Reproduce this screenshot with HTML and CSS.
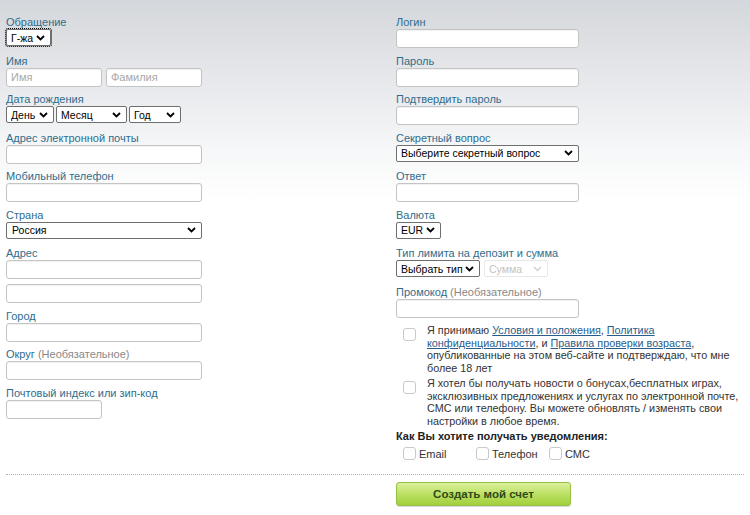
FILE: index.html
```html
<!DOCTYPE html>
<html lang="ru">
<head>
    <meta charset="UTF-8">
    <meta name="viewport" content="width=device-width, initial-scale=1.0">
    <title>Регистрация</title>
    <link rel="stylesheet" href="styles.css">
</head>
<body>
    <form class="signup">
        <div class="col">
            <div class="field">
                <label>Обращение</label>
                <select class="sel focused"><option>Г-жа</option></select>
            </div>
            <div class="field">
                <label>Имя</label>
                <div class="pair">
                    <input type="text" class="half" placeholder="Имя">
                    <input type="text" class="half" placeholder="Фамилия">
                </div>
            </div>
            <div class="field">
                <label>Дата рождения</label>
                <div class="pair">
                    <select class="sel day"><option>День</option></select>
                    <select class="sel month"><option>Месяц</option></select>
                    <select class="sel year"><option>Год</option></select>
                </div>
            </div>
            <div class="field">
                <label>Адрес электронной почты</label>
                <input type="text">
            </div>
            <div class="field">
                <label>Мобильный телефон</label>
                <input type="text">
            </div>
            <div class="field">
                <label>Страна</label>
                <select class="sel wide"><option>Россия</option></select>
            </div>
            <div class="field">
                <label>Адрес</label>
                <input type="text">
                <input type="text" class="second">
            </div>
            <div class="field">
                <label>Город</label>
                <input type="text">
            </div>
            <div class="field">
                <label>Округ <span class="opt">(Необязательное)</span></label>
                <input type="text">
            </div>
            <div class="field">
                <label>Почтовый индекс или зип-код</label>
                <input type="text" class="half">
            </div>
        </div>

        <div class="col">
            <div class="field">
                <label>Логин</label>
                <input type="text" class="long">
            </div>
            <div class="field">
                <label>Пароль</label>
                <input type="password" class="long">
            </div>
            <div class="field">
                <label>Подтвердить пароль</label>
                <input type="password" class="long">
            </div>
            <div class="field">
                <label>Секретный вопрос</label>
                <select class="sel long"><option>Выберите секретный вопрос</option></select>
            </div>
            <div class="field">
                <label>Ответ</label>
                <input type="text" class="long">
            </div>
            <div class="field">
                <label>Валюта</label>
                <select class="sel"><option>EUR</option></select>
            </div>
            <div class="field">
                <label>Тип лимита на депозит и сумма</label>
                <div class="pair">
                    <select class="sel"><option>Выбрать тип</option></select>
                    <select class="sel amount" disabled><option>Сумма</option></select>
                </div>
            </div>
            <div class="field">
                <label>Промокод <span class="opt">(Необязательное)</span></label>
                <input type="text" class="long">
            </div>

            <div class="agree">
                <input type="checkbox" class="box">
                <p>Я принимаю <a href="#">Условия и положения</a>, <a href="#">Политика конфиденциальности</a>, и <a href="#">Правила проверки возраста</a>, опубликованные на этом веб-сайте и подтверждаю, что мне более 18 лет</p>
            </div>
            <div class="agree">
                <input type="checkbox" class="box">
                <p>Я хотел бы получать новости о бонусах,бесплатных играх, эксклюзивных предложениях и услугах по электронной почте, СМС или телефону. Вы можете обновлять / изменять свои настройки в любое время.</p>
            </div>

            <div class="notify">
                <h4>Как Вы хотите получать уведомления:</h4>
                <div class="channels">
                    <label class="channel"><input type="checkbox" class="box"> Email</label>
                    <label class="channel"><input type="checkbox" class="box"> Телефон</label>
                    <label class="channel"><input type="checkbox" class="box"> СМС</label>
                </div>
            </div>
        </div>

        <div class="divider"></div>
        <div class="col submit-col">
            <button type="button" class="create-btn">Создать мой счет</button>
        </div>
    </form>
</body>
</html>
```

FILE: styles.css
```css
html {
    background: #fff;
}
body {
    margin: 0;
    padding: 16px 6px 0;
    min-height: 515px;
    box-sizing: border-box;
    font-family: "Liberation Sans", Arial, sans-serif;
    font-size: 11px;
    color: #333;
    background: linear-gradient(#d4d7db 0, #e9eaed 90px, #f6f7f8 150px, #fff 200px) no-repeat;
}
.signup {
    display: grid;
    grid-template-columns: 196px 1fr;
    column-gap: 194px;
}
.field {
    min-height: 32px;
    margin-bottom: 6.5px;
}
.field > label {
    display: block;
    height: 13px;
    line-height: 13px;
    color: #2f6d8d;
}
.opt {
    color: #888;
}
.pair {
    display: flex;
    gap: 2px;
}
.pair .half + .half {
    margin-left: 2px;
}
input[type=text], input[type=password] {
    display: block;
    box-sizing: border-box;
    width: 196px;
    height: 19px;
    padding: 0 4px;
    border: 1px solid #c4c4c4;
    border-radius: 3px;
    background: #fff;
    box-shadow: inset 0 1px 1px rgba(0, 0, 0, 0.06);
    font: 11px "Liberation Sans", Arial, sans-serif;
}
input::placeholder {
    color: #a8a8a8;
}
input.half {
    width: 96px;
}
input.long {
    width: 183px;
}
input.second {
    margin-top: 5px;
}
.sel {
    display: block;
    box-sizing: border-box;
    height: 17px;
    padding: 0 16px 0 4px;
    border: 1px solid #6f6f6f;
    border-radius: 2px;
    background: #fff url("data:image/svg+xml,%3Csvg xmlns='http://www.w3.org/2000/svg' width='9' height='6' viewBox='0 0 9 6'%3E%3Cpath d='M1 1l3.5 3.5L8 1' fill='none' stroke='%23000' stroke-width='1.8'/%3E%3C/svg%3E") no-repeat right 5px center;
    font: 10.5px "Liberation Sans", Arial, sans-serif;
    color: #000;
    appearance: none;
    -webkit-appearance: none;
}
.sel.focused {
    outline: 1px dotted #000;
    outline-offset: 0;
}
.sel.day {
    width: 48px;
}
.sel.month {
    width: 71px;
}
.sel.year {
    width: 52px;
}
.sel.wide {
    width: 196px;
    padding-left: 5px;
}
.sel.long {
    width: 183px;
}
.sel.amount {
    width: 64px;
    margin-left: 2px;
    border-color: #ddd;
    color: #aaa;
    background-image: url("data:image/svg+xml,%3Csvg xmlns='http://www.w3.org/2000/svg' width='9' height='6' viewBox='0 0 9 6'%3E%3Cpath d='M1 1l3.5 3.5L8 1' fill='none' stroke='%23bbb' stroke-width='1.4'/%3E%3C/svg%3E");
}
.box {
    appearance: none;
    -webkit-appearance: none;
    flex: none;
    width: 13px;
    height: 13px;
    margin: 0;
    border: 1px solid #c9c9c9;
    border-radius: 3px;
    background: #fff;
}
.agree {
    display: flex;
    align-items: flex-start;
    gap: 11px;
    padding-left: 7px;
    margin-bottom: 3px;
}
.agree .box {
    margin-top: 4px;
}
.agree p {
    width: 316px;
    margin: 0;
    font-size: 10.8px;
    line-height: 12.5px;
    color: #333;
}
.agree a {
    color: #2a5d8a;
}
.notify h4 {
    margin: 2px 0 5px;
    font-size: 11px;
    line-height: 12px;
    color: #222;
}
.channels {
    display: flex;
    padding-left: 7px;
}
.channel {
    display: flex;
    align-items: center;
    gap: 3px;
    width: 73px;
    color: #333;
}
.divider {
    grid-column: 1 / -1;
    margin-top: 14px;
    border-top: 1px dotted #b0b0b0;
}
.submit-col {
    grid-column: 2;
    padding-top: 7px;
}
.create-btn {
    width: 175px;
    height: 24px;
    border: 1px solid #96bf45;
    border-radius: 3px;
    background: linear-gradient(#dcf19b, #b6dd5b 60%, #a2cf3d);
    box-shadow: 0 1px 1px rgba(0, 0, 0, 0.15);
    font: bold 11.5px "Liberation Sans", Arial, sans-serif;
    color: #2e4a17;
    cursor: pointer;
}
```
